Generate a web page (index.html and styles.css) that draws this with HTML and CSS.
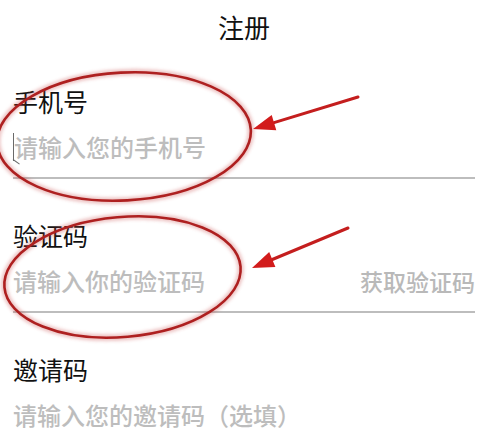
FILE: index.html
```html
<!DOCTYPE html>
<html lang="zh-CN">
<head>
<meta charset="utf-8">
<title>注册</title>
<link rel="stylesheet" href="styles.css">
</head>
<body>
<div class="page">
  <h1 class="title">注册</h1>

  <div class="field">
    <div class="label">手机号</div>
    <div class="input-row">
      <span class="caret"></span>
      <span class="placeholder">请输入您的手机号</span>
    </div>
  </div>

  <div class="field">
    <div class="label">验证码</div>
    <div class="input-row">
      <span class="placeholder">请输入你的验证码</span>
      <span class="action">获取验证码</span>
    </div>
  </div>

  <div class="field">
    <div class="label">邀请码</div>
    <div class="input-row no-line">
      <span class="placeholder">请输入您的邀请码（选填）</span>
    </div>
  </div>

  <svg class="annotations" width="482" height="443" viewBox="0 0 482 443" xmlns="http://www.w3.org/2000/svg">
    <defs>
      <filter id="glow" x="-20%" y="-20%" width="140%" height="140%">
        <feGaussianBlur stdDeviation="1.6"/>
      </filter>
    </defs>
    <g fill="none">
      <ellipse cx="124" cy="136.5" rx="127" ry="64" transform="rotate(-3 124 136.5)" stroke="rgba(200,70,70,0.3)" stroke-width="7" filter="url(#glow)"/>
      <ellipse cx="124" cy="136.5" rx="127" ry="64" transform="rotate(-3 124 136.5)" stroke="#ae2020" stroke-width="2.6"/>
      <ellipse cx="122.5" cy="277" rx="118.5" ry="60" transform="rotate(-5 122.5 277)" stroke="rgba(200,70,70,0.3)" stroke-width="7" filter="url(#glow)"/>
      <ellipse cx="122.5" cy="277" rx="118.5" ry="60" transform="rotate(-5 122.5 277)" stroke="#ae2020" stroke-width="2.6"/>
    </g>
    <g>
      <line x1="358" y1="97" x2="274" y2="122.6" stroke="#c41e1e" stroke-width="3" stroke-linecap="round"/>
      <polygon points="253,129 271.7,115 276.3,130.2" fill="#d21c1c"/>
      <line x1="348" y1="228" x2="272.3" y2="259.5" stroke="#c41e1e" stroke-width="3" stroke-linecap="round"/>
      <polygon points="252,268 269.2,252.1 275.4,266.9" fill="#d21c1c"/>
    </g>
  </svg>
</div>
</body>
</html>
```

FILE: styles.css
```css
html, body {
  margin: 0;
  padding: 0;
  background: #ffffff;
}

.page {
  position: relative;
  box-sizing: border-box;
  width: 482px;
  height: 443px;
  overflow: hidden;
  padding: 14px 7px 0 13px;
  font-family: "Noto Sans CJK SC", "Noto Sans", sans-serif;
  color: #111111;
}

.title {
  margin: 0;
  font-size: 26px;
  line-height: 26px;
  font-weight: 400;
  text-align: center;
}

.field {
  margin-top: 44px;
}

.field:first-of-type {
  margin-top: 49px;
}

.label {
  font-size: 25px;
  line-height: 25px;
}

.input-row {
  display: flex;
  align-items: center;
  justify-content: space-between;
  height: 24px;
  margin-top: 21px;
  padding-bottom: 18px;
  border-bottom: 2px solid #bdbdbd;
}

.input-row.no-line {
  border-bottom: none;
}

.caret {
  position: relative;
  flex: 0 0 1px;
  width: 1px;
  height: 28px;
  background: #6a6a6a;
}

.caret::after {
  content: "";
  position: absolute;
  left: 0;
  bottom: 1px;
  width: 8px;
  height: 1px;
  background: #6a6a6a;
  transform-origin: left center;
  transform: rotate(35deg);
}

.input-row .placeholder {
  flex: 1 1 auto;
  font-size: 24px;
  line-height: 24px;
  font-weight: 500;
  color: #bdbdbd;
}

.action {
  font-size: 23px;
  line-height: 24px;
  font-weight: 500;
  color: #b9b9b9;
}

.annotations {
  position: absolute;
  top: 0;
  left: 0;
  pointer-events: none;
}
```
